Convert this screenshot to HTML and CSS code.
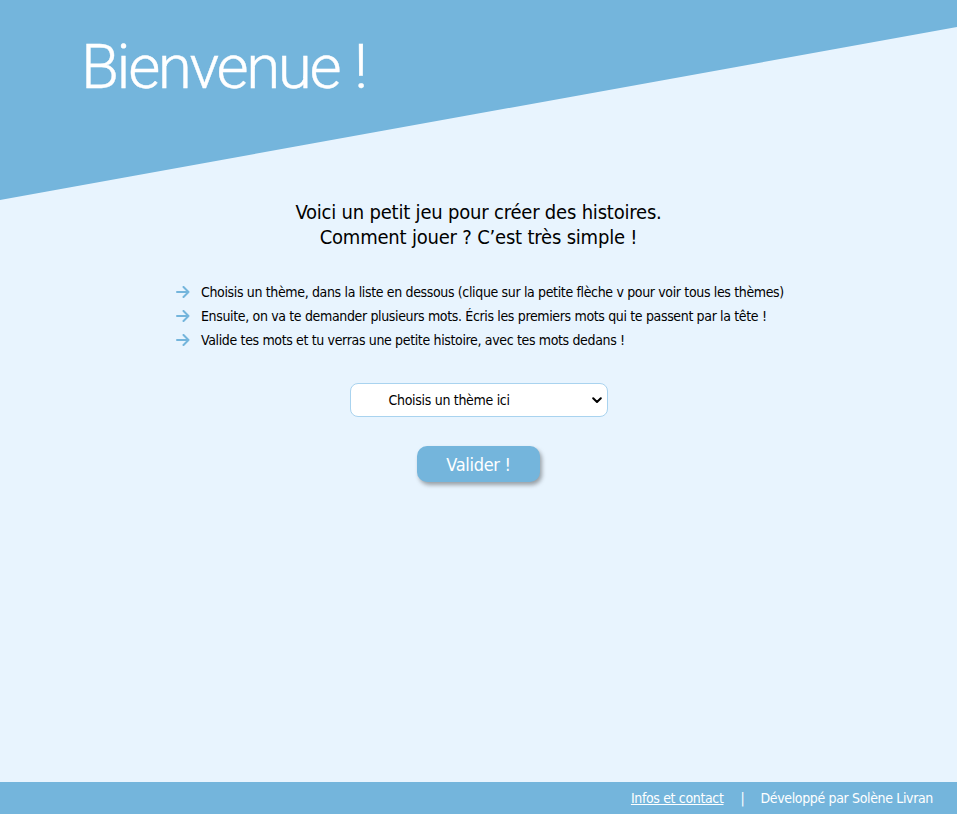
FILE: index.html
```html
<!DOCTYPE html>
<html lang="fr">
<head>
<meta charset="utf-8">
<title>Bienvenue</title>
<link rel="stylesheet" href="styles.css">
</head>
<body>
<div class="page">
  <header class="banner">
    <h1 class="title">Bienvenue !</h1>
  </header>
  <main class="content">
    <h2 class="intro">Voici un petit jeu pour créer des histoires.<br>Comment jouer ? C’est très simple !</h2>
    <ul class="steps">
      <li><svg class="arrow" width="14" height="12" viewBox="0 0 14 12"><path d="M1 6 H12.5 M7.5 1 L12.5 6 L7.5 11" fill="none" stroke="#74b5dc" stroke-width="2" stroke-linecap="round" stroke-linejoin="round"/></svg>Choisis un thème, dans la liste en dessous (clique sur la petite flèche v pour voir tous les thèmes)</li>
      <li><svg class="arrow" width="14" height="12" viewBox="0 0 14 12"><path d="M1 6 H12.5 M7.5 1 L12.5 6 L7.5 11" fill="none" stroke="#74b5dc" stroke-width="2" stroke-linecap="round" stroke-linejoin="round"/></svg>Ensuite, on va te demander plusieurs mots. Écris les premiers mots qui te passent par la tête !</li>
      <li><svg class="arrow" width="14" height="12" viewBox="0 0 14 12"><path d="M1 6 H12.5 M7.5 1 L12.5 6 L7.5 11" fill="none" stroke="#74b5dc" stroke-width="2" stroke-linecap="round" stroke-linejoin="round"/></svg>Valide tes mots et tu verras une petite histoire, avec tes mots dedans !</li>
    </ul>
    <form class="form">
      <div class="select">
        <span class="select-label">Choisis un thème ici</span>
        <svg class="chev" width="10" height="7" viewBox="0 0 10 7"><path d="M1.2 1.2 L5 5 L8.8 1.2" fill="none" stroke="#000" stroke-width="2" stroke-linecap="round" stroke-linejoin="round"/></svg>
      </div>
      <button type="button" class="btn">Valider !</button>
    </form>
  </main>
  <footer class="footer">
    <a href="#" class="link">Infos et contact</a>
    <span class="sep">|</span>
    <span>Développé par Solène Livran</span>
  </footer>
</div>
</body>
</html>
```
FILE: styles.css
```css
html, body {
  margin: 0;
  padding: 0;
}
body {
  background: #e8f4fe;
  font-family: "DejaVu Sans Condensed", "Liberation Sans", sans-serif;
  color: #000;
}
.page {
  min-height: 100vh;
  display: flex;
  flex-direction: column;
}
.banner {
  height: 200px;
  background: #74b5dc;
  clip-path: polygon(0 0, 100% 0, 100% 27px, 0 100%);
  padding: 27px 0 0 81px;
  box-sizing: border-box;
}
.title {
  margin: 0;
  font-family: Roboto, "DejaVu Sans Condensed", sans-serif;
  font-weight: 300;
  font-size: 62px;
  line-height: 80px;
  color: #fff;
  letter-spacing: -2.4px;
  word-spacing: 2px;
  -webkit-text-stroke: 0.4px #fff;
}
.content {
  display: flex;
  flex-direction: column;
  align-items: center;
}
.intro {
  margin: 0;
  font-weight: 400;
  font-size: 20px;
  letter-spacing: -0.2px;
  line-height: 25px;
  text-align: center;
}
.steps {
  list-style: none;
  margin: 30px 0 0 176px;
  padding: 0;
  align-self: flex-start;
}
.steps li {
  font-size: 14px;
  letter-spacing: -0.35px;
  line-height: 24px;
  display: flex;
  align-items: center;
}
.arrow {
  margin-right: 11px;
  flex: none;
}
.form {
  display: flex;
  flex-direction: column;
  align-items: center;
  margin-top: 31px;
}
.select {
  width: 258px;
  height: 34px;
  box-sizing: border-box;
  background: #fff;
  border: 1px solid #a9d3ef;
  border-radius: 8px;
  display: flex;
  align-items: center;
  padding: 0 3px 0 38px;
  font-size: 14px;
  letter-spacing: -0.3px;
}
.select-label {
  flex: 1;
}
.chev {
  margin-right: 2px;
}
.btn {
  margin-top: 29px;
  width: 123px;
  height: 36px;
  border: none;
  border-radius: 10px;
  background: #74b5dc;
  color: #fff;
  font-family: inherit;
  font-size: 18px;
  letter-spacing: -0.3px;
  box-shadow: 2px 3px 4px rgba(0, 0, 0, 0.35);
}
.footer {
  margin-top: auto;
  height: 32px;
  background: #74b5dc;
  color: #fff;
  display: flex;
  justify-content: flex-end;
  align-items: center;
  padding-right: 24px;
  font-size: 14px;
  letter-spacing: -0.35px;
}
.link {
  color: #fff;
  text-decoration: underline;
}
.sep {
  margin: 0 16px 0 17px;
}
```
